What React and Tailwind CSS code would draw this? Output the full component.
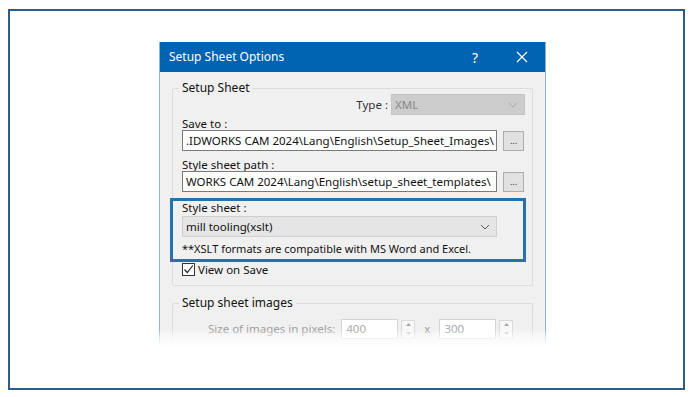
import React from "react";

const font = { fontFamily: '"Noto Sans", "Open Sans", sans-serif' };

const Chevron = ({ className }) => (
  <svg className={className} width="10" height="6" viewBox="0 0 10 6" fill="none">
    <path d="M1 1l4 4 4-4" stroke="currentColor" strokeWidth="1" />
  </svg>
);

const Spinner = () => (
  <div className="flex flex-col w-[14px] h-[19px] border border-[#d9d9d9] bg-[#f7f7f7] ml-[3px]">
    <div className="flex-1 flex items-center justify-center text-[#a8a8a8]">
      <svg width="5" height="3" viewBox="0 0 5 3"><path d="M0 3L2.5 0 5 3z" fill="currentColor" /></svg>
    </div>
    <div className="flex-1 flex items-center justify-center text-[#cfcfcf]">
      <svg width="5" height="3" viewBox="0 0 5 3"><path d="M0 0L2.5 3 5 0z" fill="currentColor" /></svg>
    </div>
  </div>
);

const PathRow = ({ value }) => (
  <div className="flex items-center gap-[6px]">
    <div className="w-[315px] h-[21px] bg-white border border-[#7a7a7a] pl-[3px] flex items-center overflow-hidden whitespace-nowrap text-[11.5px] text-[#111]">
      {value}
    </div>
    <div className="w-[21px] h-[20px] bg-[#e1e1e1] border border-[#adadad] flex items-end justify-center text-[9px] leading-none text-[#333] pb-[5px]">
      ...
    </div>
  </div>
);

const App = () => {
  return (
    <div className="w-[692px] h-[397px] bg-white pt-[9px] pl-[8px]" style={font}>
      <div className="w-[677px] h-[381px] border-2 border-[#2c5d8a] overflow-hidden">
        <div className="relative ml-[149px] mt-[31px] w-[387px] h-[305px]">
          <div className="h-full border-x border-[#8fb2d4] bg-[#f0f0f0] overflow-hidden">
            <div className="h-[30px] bg-[#0063b1] flex items-center text-white pl-[9px] pr-[17px]">
              <span className="text-[12px] flex-1">Setup Sheet Options</span>
              <span className="text-[14px] mr-[38px]">?</span>
              <svg width="12" height="12" viewBox="0 0 12 12">
                <path d="M1 1l10 10M11 1L1 11" stroke="white" strokeWidth="1.2" />
              </svg>
            </div>

            <div className="px-[12px] pt-[16px]">
              <div className="relative border border-[#dcdcdc] rounded-[2px] h-[198px] pl-[9px] pt-[5px]">
                <span className="absolute -top-[9px] left-[6px] px-[3px] bg-[#f0f0f0] text-[12px] leading-[16px] text-[#111]">
                  Setup Sheet
                </span>
                <div className="flex items-center justify-end pr-[7px] gap-[3px]">
                  <span className="text-[11.5px] text-[#333]">Type :</span>
                  <div className="w-[134px] h-[21px] bg-[#cccccc] border border-[#c4c4c4] flex items-center justify-between pl-[3px] pr-[6px] text-[11.5px] text-[#888]">
                    <span>XML</span>
                    <Chevron className="text-[#a8a8a8]" />
                  </div>
                </div>
                <div className="text-[11.5px] text-[#111] leading-[12px] mt-[3px]">Save to :</div>
                <PathRow value=".IDWORKS CAM 2024\Lang\English\Setup_Sheet_Images\" />
                <div className="text-[11.5px] text-[#111] leading-[12px] mt-[8px]">Style sheet path :</div>
                <PathRow value="WORKS CAM 2024\Lang\English\setup_sheet_templates\" />

                <div className="-ml-[12px] mt-[6px] w-[356px] h-[64px] border-[3px] border-[#2373ac] pl-[9px] pt-[1px]">
                  <div className="text-[11.5px] text-[#111] leading-[12px] mb-[2px]">Style sheet :</div>
                  <div className="w-[315px] h-[21px] bg-[#e5e5e5] border border-[#cfcfcf] flex items-center justify-between pl-[3px] pr-[6px] text-[11.5px] text-[#111]">
                    <span>mill tooling(xslt)</span>
                    <Chevron className="text-[#555]" />
                  </div>
                  <div className="text-[11px] text-[#111] leading-[12px] mt-[6px]">
                    **XSLT formats are compatible with MS Word and Excel.
                  </div>
                </div>

                <div className="flex items-center gap-[3px] mt-[1px]">
                  <div className="w-[13px] h-[13px] border border-[#333] bg-white flex items-center justify-center">
                    <svg width="11" height="11" viewBox="0 0 11 11">
                      <path d="M1.5 5.5l2.8 3L9.8 1.5" stroke="#222" strokeWidth="1.2" fill="none" />
                    </svg>
                  </div>
                  <span className="text-[11.5px] leading-[13px] text-[#111]">View on Save</span>
                </div>
              </div>

              <div className="relative mt-[17px] border border-[#dcdcdc] rounded-[2px] h-[60px] pt-[15px]">
                <span className="absolute -top-[9px] left-[6px] px-[3px] bg-[#f0f0f0] text-[12px] leading-[16px] text-[#111]">
                  Setup sheet images
                </span>
                <div className="flex items-center pl-[35px]">
                  <span className="text-[11.5px] text-[#9e9e9e] mr-[6px]">Size of images in pixels:</span>
                  <div className="w-[57px] h-[20px] bg-white border border-[#d4d4d4] pl-[4px] flex items-center text-[11.5px] text-[#a8a8a8]">400</div>
                  <Spinner />
                  <span className="text-[11.5px] text-[#9e9e9e] mx-[9px]">x</span>
                  <div className="w-[57px] h-[20px] bg-white border border-[#d4d4d4] pl-[4px] flex items-center text-[11.5px] text-[#a8a8a8]">300</div>
                  <Spinner />
                </div>
              </div>
            </div>
          </div>

          <div className="absolute -left-px -right-px bottom-0 h-[18px] bg-gradient-to-b from-white/0 via-white/70 to-white" />
        </div>
      </div>
    </div>
  );
};

export default App;
